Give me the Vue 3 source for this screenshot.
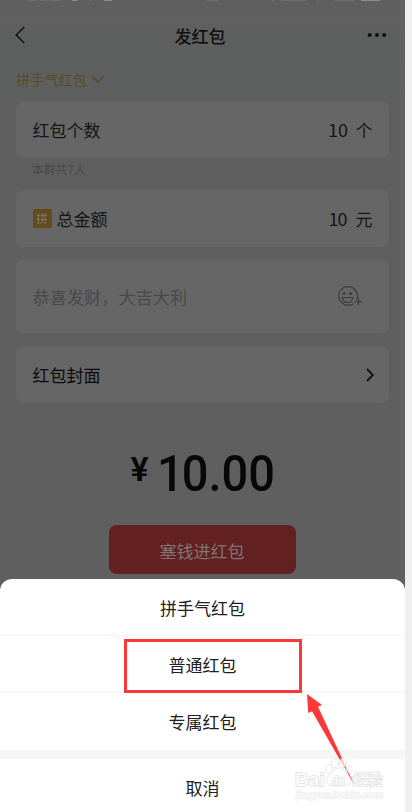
<script setup>
const options = ['拼手气红包', '普通红包', '专属红包']
</script>

<template>
  <main class="screen">
    <section class="phone">
      <div class="status">
        <svg width="405" height="2" viewBox="0 0 405 2">
          <path d="M28 .3h9M40 .3h6M49 .3h12M89 .3h3M207 .3h12M272 .3h3M282 .3h24M317 .3h2M335 .3h20" stroke="#757575" stroke-width="1" />
          <path d="M72 .3h5M104 .3h8M361 .3h19" stroke="#8c8c8c" stroke-width="1.4" />
        </svg>
      </div>
      <header class="nav">
        <svg class="back" width="12" height="20" viewBox="0 0 12 20"><path d="M10.3 2 2.2 10l8.1 8" /></svg>
        <h1>发红包</h1>
        <svg class="more" width="20" height="6" viewBox="0 0 20 6"><circle cx="2.7" cy="3" r="2" /><circle cx="10" cy="3" r="2" /><circle cx="17.2" cy="3" r="2" /></svg>
      </header>
      <div class="kind">
        <span>拼手气红包</span>
        <svg width="14" height="8" viewBox="0 0 14 8"><path d="m1 1 6 6 6-6" /></svg>
      </div>
      <div class="card count"><span>红包个数</span><span class="amount">10</span><span>个</span></div>
      <div class="hint">本群共7人</div>
      <div class="card total"><i class="tag">拼</i><span>总金额</span><span class="amount narrow">10</span><span>元</span></div>
      <div class="card wish">
        <span>恭喜发财，大吉大利</span>
        <svg width="27" height="22" viewBox="0 0 27 22">
          <path d="M16.6 17.4a9.3 9.3 0 1 1 3.2-4.2M5.3 11.5h10.4c0 6.6-10.4 6.6-10.4 0Z" />
          <path d="M18 15.7h7M21.5 12.2v7" />
          <g class="eyes"><circle cx="7" cy="7.5" r="1.5" /><circle cx="13.7" cy="7.5" r="1.5" /></g>
        </svg>
      </div>
      <div class="card cover">
        <span>红包封面</span>
        <svg width="8" height="14" viewBox="0 0 8 14"><path d="m1 1 5.8 6L1 13" /></svg>
      </div>
      <div class="sum"><span class="yen">¥</span><span class="value"><span class="lead">1</span>0.00</span></div>
      <div class="pay">塞钱进红包</div>
      <div class="sheet">
        <div v-for="option in options" :key="option" class="option">{{ option }}</div>
        <div class="cancel">取消</div>
      </div>
    </section>
    <div class="highlight"></div>
    <svg class="overlay" width="130" height="128" viewBox="282 684 130 128">
      <path d="M307 694 322 705 318 706.8 342.8 760 354 784 340 760 312 711.3 308.2 713Z" fill="#fd3838" />
      <g class="mark">
        <ellipse cx="329" cy="769" rx="3.2" ry="4.2" />
        <ellipse cx="335" cy="763" rx="3.5" ry="4.7" />
        <ellipse cx="343" cy="763" rx="3.5" ry="4.7" />
        <ellipse cx="349" cy="770" rx="3.2" ry="4.2" />
        <path d="M338.5 768c-4 0-6 4-9 7-5 4-3 11 3 11h13c6 0 7-7 3-11-4-3-5-7-10-7Z" />
        <text class="brand" x="295" y="786" textLength="29.5" lengthAdjust="spacingAndGlyphs">Bai</text>
        <text class="du" x="331.5" y="784.5" textLength="13.5" lengthAdjust="spacingAndGlyphs">du</text>
        <text class="cn" x="352.5" y="785" textLength="30" lengthAdjust="spacingAndGlyphs">经验</text>
        <text class="site" x="296" y="798" textLength="87" lengthAdjust="spacingAndGlyphs">jingyan.baidu.com</text>
      </g>
      <path d="m346.5 769 7.5 15-5.8-10Z" fill="#fd3838" />
    </svg>
  </main>
</template>

<style>
body { background: #efefef; }
</style>

<style scoped>
* { box-sizing: border-box; }
.screen {
  position: relative;
  width: 412px;
  height: 812px;
  overflow: hidden;
  background: #efefef;
  font-family: "Noto Sans CJK SC", sans-serif;
  font-size: 17px;
  line-height: 24px;
  color: #151515;
}
.phone {
  display: flex;
  flex-direction: column;
  width: 405px;
  height: 812px;
  background: linear-gradient(#5f5f5f 0, #5d605e 65px, #5d605e 92px, #5f5f5f 98px);
}
.status { height: 2px; }
.status svg { display: block; }
.nav {
  display: flex;
  align-items: center;
  justify-content: space-between;
  height: 66px;
  padding: 0 18px 0 14px;
}
.nav h1 { margin: 1px 0 0 7px; font-size: 17px; font-weight: 500; color: #111; }
svg { fill: none; flex: none; }
.back path { stroke: #151515; stroke-width: 1.6; }
.more { fill: #111; }
.kind {
  display: flex;
  align-items: center;
  gap: 4px;
  height: 22px;
  padding-left: 16px;
  margin-bottom: 11px;
  color: #5b4a29;
  font-size: 14.2px;
}
.kind svg path { stroke: #5b4a29; stroke-width: 1.6; }
.card {
  display: flex;
  align-items: center;
  flex: none;
  width: 373px;
  height: 56.5px;
  margin-left: 16px;
  padding: 2px 16.5px 0;
  border-radius: 7px;
  background: #666;
}
.amount {
  margin-left: auto;
  margin-right: 7.5px;
  font-size: 18px;
  line-height: 22px;
  padding-bottom: 2px;
}
.narrow { letter-spacing: -1px; margin-right: 9px; }
.hint {
  height: 24px;
  margin: -1px 0 9.5px 32px;
  font-size: 11.8px;
  color: #484848;
}
.tag {
  width: 19px;
  height: 19px;
  margin: 0 5px 2px 0;
  border-radius: 2px;
  background: #654a1e;
  color: #85796a;
  font-size: 11.5px;
  font-style: normal;
  line-height: 18px;
  text-align: center;
}
.wish { justify-content: space-between; height: 73px; margin-top: 13px; padding-right: 25px; color: #494949; font-size: 17.2px; }
.wish svg { stroke: #3c3c3c; stroke-width: 1.2; }
.wish .eyes { fill: #3c3c3c; stroke: none; }
.cover { justify-content: space-between; height: 57px; margin-top: 13px; padding-right: 15.5px; color: #0b0b0b; }
.cover svg path { stroke: #111; stroke-width: 1.8; }
.sum {
  display: flex;
  height: 60px;
  margin: 41px 0 0 130.5px;
  color: #080808;
  font-family: Roboto, sans-serif;
  font-size: 50px;
  font-weight: 500;
  line-height: 60px;
}
.yen { width: 26px; font-size: 34px; line-height: 50px; font-weight: 600; }
.value { transform: scaleX(.94); transform-origin: left; }
.lead { letter-spacing: -2px; }
.pay {
  flex: none;
  width: 187px;
  height: 49px;
  margin: 21.5px 0 0 109px;
  border-radius: 8px;
  background: #632020;
  color: #807573;
  line-height: 51px;
  text-align: center;
  text-indent: -1px;
}
.sheet {
  flex: 1;
  margin-top: 4.5px;
  border-radius: 12px 12px 0 0;
  background: #fff;
  color: #202020;
  text-align: center;
  overflow: hidden;
}
.option { height: 57px; border-bottom: 2px solid #f9f9f9; line-height: 58px; }
.option:nth-child(3) { height: 66px; border-bottom: 9px solid #f6f6f6; }
.cancel { height: 53px; line-height: 57px; }
.highlight {
  position: absolute;
  left: 124px;
  top: 639px;
  width: 178px;
  height: 54px;
  border: 3px solid #fd3838;
}
.overlay { position: absolute; left: 282px; top: 684px; }
.mark { fill: rgba(255, 255, 255, .7); stroke: #e2e2e2; stroke-width: .8; }
.mark text { font-family: "Liberation Sans", sans-serif; font-weight: bold; paint-order: stroke; stroke-width: 1.5; fill: #fafafa; }
.mark .brand { font-size: 18.5px; }
.mark .du { font-size: 13px; }
.mark .cn { font-family: "Noto Sans CJK SC", sans-serif; font-size: 15px; font-weight: 500; }
.mark .site { font-size: 9px; stroke: #ededed; stroke-width: 1.3; }
</style>
